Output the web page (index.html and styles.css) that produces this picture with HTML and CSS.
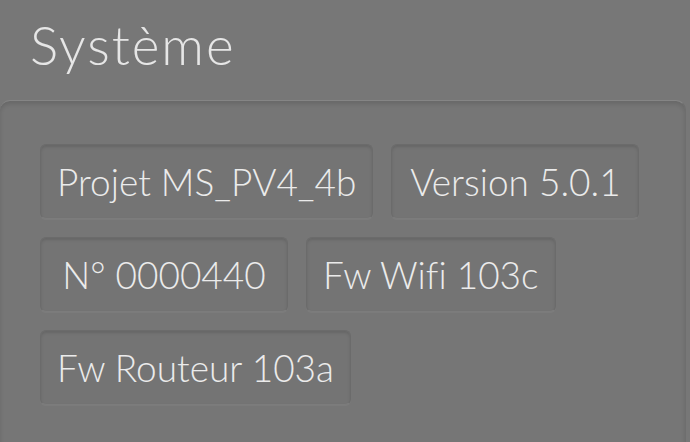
FILE: index.html
```html
<!DOCTYPE html>
<html lang="fr">
<head>
    <meta charset="UTF-8">
    <title>Système</title>
    <link rel="stylesheet" href="styles.css">
</head>
<body>
    <h1 class="page-title">Système</h1>

    <section class="panel">
        <div class="chip-row">
            <div class="chip">Projet MS_PV4_4b</div>
            <div class="chip">Version 5.0.1</div>
        </div>
        <div class="chip-row">
            <div class="chip">N° 0000440</div>
            <div class="chip">Fw Wifi 103c</div>
        </div>
        <div class="chip-row">
            <div class="chip">Fw Routeur 103a</div>
        </div>
    </section>
</body>
</html>
```

FILE: styles.css
```css
/* Reset */
* {
    margin: 0;
    padding: 0;
    box-sizing: border-box;
}

body {
    font-family: 'Lato', 'DejaVu Sans', sans-serif;
    font-weight: 300;
    font-variant-ligatures: none; /* keep "fi" as two letters */
    background-color: #777777;
    color: #ebebeb;
    height: 442px;
    overflow: hidden;
}

/* Title */
.page-title {
    font-size: 53px;
    font-weight: 300;
    letter-spacing: 2px;
    line-height: 1;
    padding: 18px 0 0 30px;
    height: 100px;
    color: #e6e6e6;
}

/* Panel */
.panel {
    width: 686px;
    height: 360px;
    display: flex;
    flex-direction: column;
    gap: 18px;
    padding: 43px 40px 0 40px;
    background-color: #767676;
    border-top: 1px solid #858585;
    border-right: 1px solid #6e6e6e;
    border-radius: 10px 10px 0 0;
    box-shadow: inset 0 3px 4px rgba(0, 0, 0, 0.12);
}

.chip-row {
    display: flex;
    gap: 18px;
}

/* Info chips */
.chip {
    min-width: 248px;
    height: 75px;
    padding: 0 16px;
    display: flex;
    align-items: center;
    justify-content: center;
    font-size: 37px;
    white-space: nowrap;
    background-color: #747474;
    border: 1px solid #6b6b6b;
    border-bottom-color: #7c7c7c;
    border-radius: 6px;
    box-shadow: inset 0 2px 3px rgba(0, 0, 0, 0.12), 0 1px 1px rgba(255, 255, 255, 0.05);
}
```
